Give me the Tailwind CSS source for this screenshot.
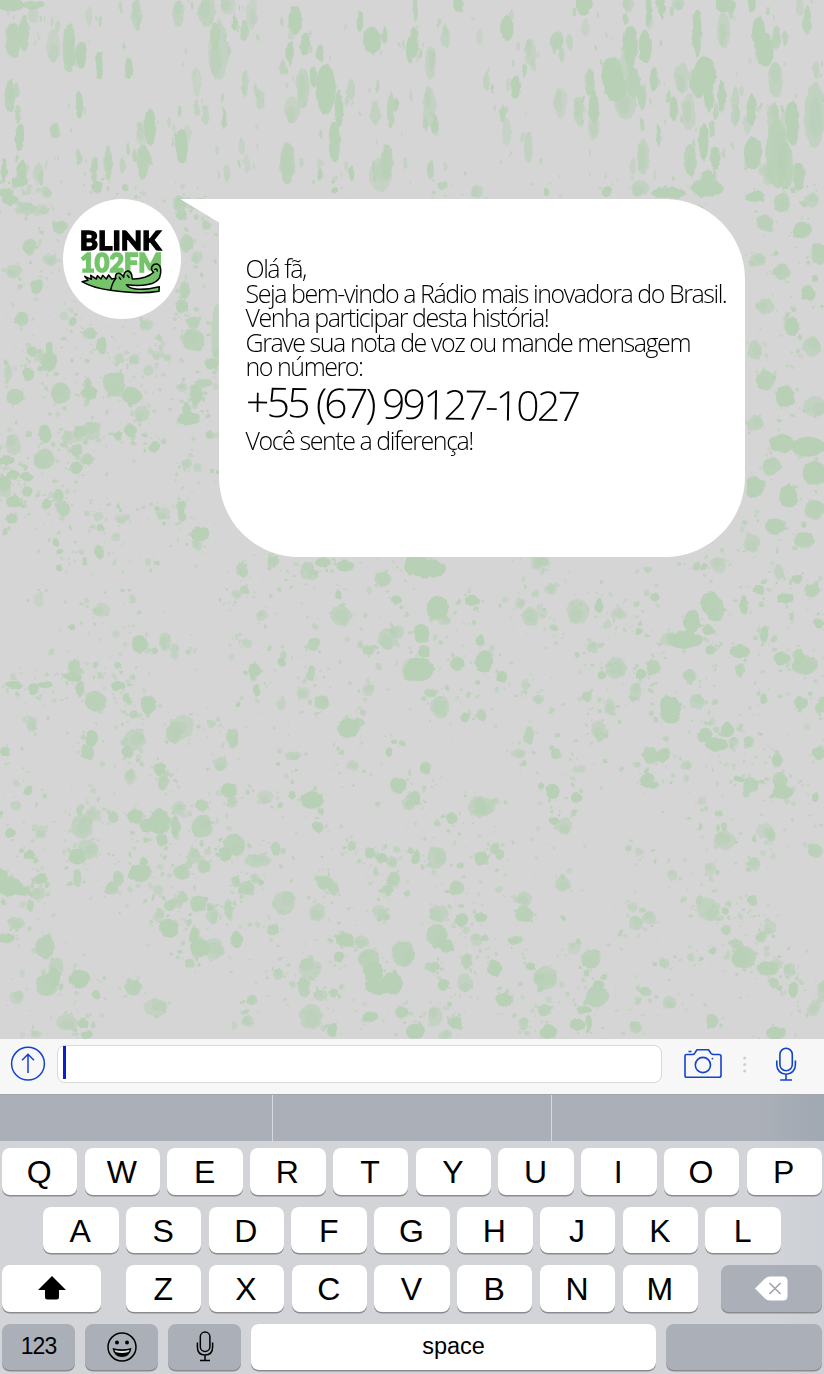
<!DOCTYPE html>
<html lang="pt-BR">
<head>
<meta charset="utf-8">
<title>Blink 102 FM</title>
<script src="https://cdn.jsdelivr.net/npm/@tailwindcss/browser@4"></script>
</head>
<body class="w-[824px] h-[1374px] overflow-hidden bg-[#d5d5d5] text-black flex flex-col">

<main class="relative h-[1039px] shrink-0 overflow-hidden">
  <svg class="absolute inset-0" width="824" height="1039" aria-hidden="true">
    <defs>
      <filter id="rough" x="0" y="0" width="100%" height="100%" color-interpolation-filters="sRGB"><feTurbulence type="fractalNoise" baseFrequency="0.11" numOctaves="2" seed="4"/><feDisplacementMap in="SourceGraphic" scale="4.5" xChannelSelector="R" yChannelSelector="G"/></filter>
    </defs>
    <g id="paint" fill="#b8d0b6" filter="url(#rough)"></g>
  </svg>

  <div class="relative flex items-start pl-[63px] pt-[199px]">
    <div class="w-[118px] h-[120px] rounded-[50%] bg-white shrink-0">
      <svg width="118" height="120" viewBox="39 27 354 360">
        <text x="89" y="179" font-family="Lato" font-weight="900" font-size="81" textLength="245" lengthAdjust="spacingAndGlyphs" stroke="#000" stroke-width="4">BLINK</text>
        <text x="91" y="245" font-family="Lato" font-weight="900" font-size="82" textLength="245" lengthAdjust="spacingAndGlyphs" fill="#75c46b" stroke="#75c46b" stroke-width="5">102FM</text>
        <path d="M96 275L114 271L104 259L124 268L122 256L139 267L142 257L153 267L158 256L169 267L176 255L185 267L197 265C194 252 204 245 214 253L221 262C221 240 239 238 245 254L247 267C274 268 299 259 311 247C298 238 307 220 321 222C335 226 334 247 329 262C319 284 278 290 229 284C239 301 282 301 328 290L327 304C281 312 227 308 181 301C150 297 120 289 96 275Z" fill="#75c46b" stroke="#000" stroke-width="4.5" stroke-linejoin="round"/>
        <path d="M197 266C187 276 185 288 182 300M208 262L212 268M232 256L237 262M314 238Q322 235 322 243" fill="none" stroke="#000" stroke-width="4.5" stroke-linecap="round"/>
      </svg>
    </div>
    <svg class="shrink-0" width="38" height="24" viewBox="0 0 38 24"><path d="M-1 0H38V23.5Z" fill="#fff"/></svg>
    <section class="w-[526px] h-[358px] shrink-0 bg-white rounded-tr-[80px] rounded-b-[80px] pl-[26.5px] pt-[57px] whitespace-nowrap font-['Open_Sans'] font-light text-[25px] leading-[24.5px] tracking-[-1.45px]">
      <p>Olá fã,</p>
      <p>Seja bem-vindo a Rádio mais inovadora do Brasil.</p>
      <p>Venha participar desta história!</p>
      <p>Grave sua nota de voz ou mande mensagem</p>
      <p>no número:</p>
      <p class="h-[49px] w-fit text-[41px] leading-[49px] tracking-[-2.75px] rotate-[0.8deg]">+55 (67) 99127-1027</p>
      <p>Você sente a diferença!</p>
    </section>
  </div>
</main>

<div class="h-[55px] shrink-0 bg-[#f7f7f7] flex items-start pl-[10px] pt-[6px]">
  <svg class="mt-[1px]" width="36" height="36" viewBox="0 0 36 36" fill="none" stroke="#1342cf" stroke-width="1.5"><circle cx="18" cy="17.7" r="16.4"/><path d="M18 27V8.5M12 14.2L18 8.3L24 14.2"/></svg>
  <div class="ml-[11px] w-[605px] h-[38px] bg-white border border-[#d9d9db] rounded-[8px] pl-[5px]"><div class="w-[3px] h-[33px] bg-[#0a20d0]"></div></div>
  <svg class="ml-[21px]" width="40" height="38" viewBox="0 0 40 38" fill="none" stroke="#1342cf" stroke-width="1.6" stroke-linejoin="round"><path d="M3.5 9.5H9.5Q11.5 9.5 12.5 7L14 4.8H25.5L28 8.5Q29 9.5 31 9.5H36Q38 9.5 38 11.5V30.5Q38 32.3 36 32.3H3.8Q2 32.3 2 30.5V11Q2 9.5 3.5 9.5ZM5.5 6.5H8.5"/><circle cx="19.9" cy="20" r="7.6"/><circle cx="29.4" cy="13.6" r=".9" fill="#1342cf" stroke="none"/></svg>
  <svg class="ml-[18px]" width="8" height="38" fill="#cfcfd0"><circle cx="3.7" cy="13" r="1.5"/><circle cx="3.7" cy="19.5" r="1.5"/><circle cx="3.7" cy="26" r="1.5"/></svg>
  <svg class="ml-[25px]" width="24" height="38" viewBox="0 0 24 38" fill="none" stroke="#1342cf" stroke-width="1.6"><rect x="5.9" y="3.3" width="12.4" height="22.4" rx="6.2"/><path d="M2.8 15.5V20A9.3 9.3 0 0 0 21.4 20V15.5M12 29.3V34.8M6.2 35H18"/></svg>
</div>

<div class="h-[47px] shrink-0 bg-gradient-to-r from-[#abb0b8] from-92% to-[#a0a8b2] border-t border-[#a2a5ab] grid grid-cols-[272px_278px_1fr]">
  <div></div><div class="border-x-[1.5px] border-[#d8dadd] w-[280px]"></div><div></div>
</div>

<div class="h-[233px] shrink-0 bg-gradient-to-r from-[#d2d4d8] from-92% to-[#cdd0d6] px-[2px] pt-[7px] flex flex-col gap-[12px] font-['Liberation_Sans'] text-[32px] leading-none">
  <div id="row1" class="grid grid-cols-10 gap-[7.3px] h-[46.5px]"></div>
  <div id="row2" class="grid grid-cols-9 gap-[7.3px] h-[46.5px] ml-[41px] mr-[41px]"></div>
  <div class="flex h-[46.5px]">
    <div class="w-[99px] rounded-[8px] bg-white shadow-[0_1.5px_0_#898b8f] flex items-center justify-center"><svg width="28" height="24" viewBox="0 0 28 24"><path d="M14 0L28 14H21V21Q21 23.5 18.5 23.5H9.5Q7 23.5 7 21V14H0Z"/></svg></div>
    <div id="row3" class="grid grid-cols-7 gap-[7.3px] w-[572px] ml-[25px]"></div>
    <div class="w-[101px] ml-auto rounded-[8px] bg-[#abb0b8] shadow-[0_1.5px_0_#898b8f] flex items-center justify-center"><svg width="33" height="25" viewBox="0 0 33 25"><path d="M0 12.5L10 2.5Q12 .5 15 .5H28Q32.5 .5 32.5 5V20Q32.5 24.5 28 24.5H15Q12 24.5 10 22.5Z" fill="#fff"/><path d="M14.5 7L25.5 18M25.5 7L14.5 18" stroke="#a0a4aa" stroke-width="1.6"/></svg></div>
  </div>
  <div class="flex h-[46.5px] text-[23px] leading-none">
    <div class="w-[73px] rounded-[8px] bg-[#abb0b8] shadow-[0_1.5px_0_#898b8f] flex items-center justify-center tracking-[-1px]">123</div>
    <div class="w-[73px] ml-[10px] rounded-[8px] bg-[#abb0b8] shadow-[0_1.5px_0_#898b8f] flex items-center justify-center"><svg width="30" height="30" viewBox="0 0 30 30"><circle cx="15" cy="15" r="14" fill="none" stroke="#000" stroke-width="1.5"/><circle cx="10" cy="10.5" r="2"/><circle cx="20" cy="10.5" r="2"/><path d="M5.5 16Q15 18.5 24.5 16Q23 25 15 25Q7 25 5.5 16Z"/><path d="M7.5 18Q15 20 22.5 18L21.5 20Q15 22 8.5 20Z" fill="#dfe1e4"/></svg></div>
    <div class="w-[73px] ml-[10px] rounded-[8px] bg-[#abb0b8] shadow-[0_1.5px_0_#898b8f] flex items-center justify-center"><svg width="18" height="31" viewBox="0 0 18 31" fill="none" stroke="#000" stroke-width="1.5"><rect x="4.3" y="1" width="9.6" height="19.5" rx="4.8"/><path d="M1.4 11.5V16Q1.4 24 9 24Q16.6 24 16.6 16V11.5M9 24V29.5M4 29.5H14"/></svg></div>
    <div class="w-[405px] ml-[10px] rounded-[8px] bg-white shadow-[0_1.5px_0_#898b8f] flex items-center justify-center text-[23.5px] leading-none pb-[1px]">space</div>
    <div class="w-[156px] ml-[10px] rounded-[8px] bg-[#abb0b8] shadow-[0_1.5px_0_#898b8f]"></div>
  </div>
</div>

<script>
const fillRow = (id, letters) => {
  document.getElementById(id).innerHTML = [...letters].map(c =>
    `<div class="rounded-[8px] bg-white shadow-[0_1.5px_0_#898b8f] flex items-center justify-center pt-[2px] pr-[1px]">${c}</div>`).join('');
};
fillRow('row1', 'QWERTYUIOP');
fillRow('row2', 'ASDFGHJKL');
fillRow('row3', 'ZXCVBNM');

// Paint splatter. Each sheet: origin, then drops as "x y rx ry strength(1-9)" in thirds of a pixel.
const sheets = [
 [0,0,`30 15 45 18 9;100 15 35 12 8;100 45 13 25 5;40 120 24 55 8;72 100 16 55 8;160 135 22 50 4;208 145 20 73 8;243 165 15 40 9;298 195 13 42 9;268 50 9 30 4;410 45 16 45 7;386 203 11 32 9;30 290 16 50 8;238 315 11 42 9;60 410 13 38 9;165 390 16 25 8;450 380 18 55 9;425 400 18 40 3;430 485 20 52 8;545 440 18 50 9;560 405 14 30 4;325 490 12 52 8;280 515 9 30 8;115 520 14 28 6;65 520 15 38 9;12 510 8 35 9;590 245 13 44 4;590 325 8 24 7;617 345 11 30 7;535 40 17 40 7;620 35 26 45 7;685 15 22 30 5;655 155 30 85 6;645 110 14 45 8;733 90 12 30 8;755 40 17 45 4;703 68 8 22 9;735 250 9 42 7;780 300 13 30 7;885 60 20 45 9;870 160 11 34 9;915 135 16 34 9;908 265 20 60 7;875 330 22 40 5;977 268 30 75 9;1017 325 13 55 9;1003 425 17 60 9;940 230 10 33 9;960 160 11 25 9;862 490 22 63 8;1052 270 13 32 7;1117 120 28 40 9;1126 340 14 35 7;1172 330 11 55 8;1140 525 33 50 5;1160 485 18 52 8;1080 65 10 30 9;1230 150 12 40 9;725 440 10 24 5;740 490 10 30 4;680 520 9 28 6;1055 520 8 24 9;960 525 8 18 9;290 560 17 18 9;60 545 25 15 9;140 575 16 15 7;15 580 25 14 9;375 565 10 9 9;1005 570 9 9 9`],
 [412,0,`5 130 14 45 9;10 30 8 35 8;138 10 14 26 9;100 112 15 32 7;55 190 16 50 6;52 320 20 60 6;68 370 9 33 9;285 85 20 38 9;355 158 17 42 6;203 110 9 25 4;223 245 10 30 7;311 262 13 35 9;272 340 9 28 8;284 395 13 42 5;350 440 14 48 7;436 122 19 28 8;472 128 11 23 7;520 80 12 30 4;515 12 24 32 9;445 310 20 46 4;500 335 16 45 7;533 245 16 40 8;545 320 15 50 9;545 380 17 42 5;600 220 33 50 9;610 260 35 45 9;655 140 22 62 9;700 140 20 48 9;635 200 15 40 6;640 310 33 48 6;665 250 23 45 8;690 290 13 38 8;650 15 17 22 7;710 30 9 50 9;750 20 9 40 9;800 10 18 20 7;725 235 12 38 9;785 325 12 36 9;693 470 17 55 7;740 405 7 33 9;940 15 32 22 9;935 90 20 54 6;855 100 14 70 9;880 220 33 52 9;810 235 22 45 6;860 250 26 45 9;830 335 22 55 5;890 280 15 50 9;875 425 14 58 9;910 475 16 36 9;835 480 20 48 8;930 290 12 48 9;970 320 13 60 7;1018 330 15 48 9;1005 370 10 36 5;1040 100 20 50 9;1060 150 25 50 9;1090 240 23 52 7;1093 115 12 35 8;1083 350 18 45 7;1140 370 20 65 9;1022 460 27 48 9;1095 460 32 105 8;1070 520 22 35 6;1120 500 26 70 8;1208 345 31 98 7;1185 60 13 45 8;1020 15 11 23 9;1213 210 10 26 7;1160 530 16 42 9;885 565 47 28 9;885 535 20 23 9;770 578 50 17 9;685 565 30 23 7;585 575 17 17 9;405 575 10 10 9;195 575 18 18 7;93 555 14 12 8`],
 [0,560,`178 25 10 10 9;115 120 15 20 4;303 148 25 24 5;398 118 9 14 7;217 202 9 9 9;350 222 13 14 5;418 252 25 27 9;495 245 18 28 7;523 275 14 24 6;222 320 18 24 8;218 350 28 14 9;285 315 10 10 8;353 317 11 11 8;42 375 29 12 9;100 388 16 19 9;135 375 23 9 9;287 423 32 31 8;240 385 13 24 9;353 377 23 14 9;446 435 24 26 9;400 460 14 12 8;380 415 12 13 8;95 493 16 23 7;275 535 19 25 9;262 575 20 22 8;402 540 34 32 6;382 575 18 21 9;550 500 32 37 6;522 520 21 32 8;15 577 15 14 9;480 627 18 18 9;390 650 17 23 6;83 693 14 13 9;490 670 16 20 8;698 533 20 29 8;662 612 20 20 7;633 490 12 12 7;687 692 23 22 9;697 725 16 18 7;795 712 22 20 5;875 705 13 11 9;935 720 34 26 9;953 800 17 17 9;1045 505 31 31 9;1078 487 18 12 8;965 428 22 22 8;910 400 20 18 5;843 436 15 15 6;932 340 13 23 8;845 307 13 14 9;763 330 18 20 9;770 390 12 20 9;742 250 14 14 6;710 104 16 14 5;735 90 15 13 8;787 164 18 16 5;725 30 16 23 8;923 30 20 25 7;940 45 14 16 7;1035 18 26 17 9;1148 58 25 22 8;1022 167 32 32 7;1165 237 30 32 7;1190 215 20 20 7;940 252 18 18 8;1015 103 9 12 9;1190 120 17 14 9;1230 330 24 34 5;1105 270 18 16 8;1105 390 18 19 5;1195 675 25 23 9;1055 617 18 17 5;1168 577 11 11 9;880 588 22 16 7;1225 730 17 20 6;246 800 32 38 7;240 750 11 16 8;265 870 32 30 6;232 890 24 24 9;280 765 22 22 5;340 770 15 16 8;405 767 23 22 9;440 795 25 19 9;480 785 30 38 9;527 797 16 30 9;485 840 17 17 9;538 745 23 22 6;605 800 30 35 8;605 735 20 18 8;703 855 32 33 8;675 885 17 20 9;772 902 38 20 7;827 865 14 22 8;125 815 18 18 5;47 737 15 17 7;30 820 15 15 9;25 980 42 28 9;65 995 28 14 9;0 945 24 20 9;123 955 20 16 9;115 1000 20 20 7;90 1035 12 18 8;48 1090 23 18 7;90 885 16 14 9;232 955 12 29 8;335 985 20 18 8;355 955 16 22 8;420 940 34 26 9;430 907 14 18 9;545 935 24 23 8;580 890 22 22 7;612 918 20 22 8;475 990 15 17 6;510 1035 18 18 8;475 1070 17 18 5;508 1105 28 29 9;548 1010 14 18 8;595 1030 25 26 8;635 1065 18 28 7;685 1050 14 23 8;600 1165 32 26 9;640 1167 33 32 6;583 1125 15 24 9;710 1140 19 27 9;740 985 24 22 8;707 965 16 17 8;767 955 14 16 7;853 1028 34 35 7;953 1060 25 27 7;975 967 24 20 8;1000 990 15 16 8;1180 957 20 22 8;1163 990 18 18 8;1110 878 18 15 9;1145 895 16 16 9;1175 905 18 20 6;1055 860 13 14 8;1140 1057 21 22 6;135 1160 30 35 8;168 1220 22 28 7;140 1275 32 33 8;165 1250 16 30 9;238 1257 30 28 9;400 1282 25 25 8;467 1343 34 28 6;48 1312 20 20 6;200 1388 32 26 6;247 1388 16 16 9;260 1423 18 12 9;108 1423 17 14 6;288 1305 13 15 9;570 1210 15 16 8;20 1135 24 15 9;757 1320 16 16 8;745 1383 18 17 7;835 1243 16 16 7;817 1110 17 16 8;930 1225 34 30 6;912 1280 18 32 8;933 1370 34 38 7;962 1305 20 18 7;998 1410 14 22 9;1105 1195 32 28 8;1120 1235 30 30 9;1175 1270 34 33 9;1140 1280 44 25 9;1210 1180 35 38 8;1035 1140 28 20 9;1085 1145 20 18 7;1018 1190 16 16 9;1000 1300 16 14 8;1110 1370 22 16 9;1205 1355 20 18 9`],
 [412,560,`50 25 52 28 9;0 15 25 30 9;78 145 34 35 9;97 180 20 17 6;182 122 22 15 9;28 220 24 30 9;35 275 18 20 9;20 330 46 34 9;137 312 21 22 9;217 305 27 32 9;205 240 14 18 9;270 350 16 18 9;85 440 30 35 7;55 398 18 14 8;160 472 15 16 9;207 465 16 18 8;355 170 25 28 7;392 160 15 16 4;323 130 17 16 6;415 87 18 16 6;375 10 20 20 5;497 155 33 38 6;562 135 12 22 9;617 160 20 18 5;585 193 12 14 6;427 203 14 12 8;543 262 18 16 7;612 325 31 32 7;570 345 13 12 9;725 320 22 23 8;688 343 16 14 9;670 395 18 26 7;595 440 18 26 5;525 408 17 16 8;560 505 21 25 6;560 530 14 13 7;350 525 14 26 8;340 375 14 15 6;380 418 16 13 7;320 582 22 16 6;433 583 16 18 8;507 627 12 12 5;40 625 16 19 9;422 695 21 22 9;494 713 17 17 9;208 740 39 32 7;205 740 20 25 9;118 775 16 18 9;8 717 17 22 9;455 797 26 23 6;428 782 15 10 9;75 893 28 32 7;208 895 20 20 9;247 867 14 17 8;262 883 14 16 8;12 890 12 22 9;133 985 24 23 8;452 973 24 22 7;338 1018 22 23 7;337 1063 28 24 8;80 1060 30 25 7;150 1080 20 20 9;205 1070 18 16 9;75 1128 32 36 8;105 1160 20 20 9;193 1140 20 18 5;310 1140 24 12 8;165 1203 18 22 8;62 1220 25 16 8;95 1275 18 18 9;158 1268 21 27 6;248 1225 20 25 9;400 1253 36 36 7;383 1256 16 18 9;355 1220 14 13 9;277 1320 24 21 9;397 1350 20 18 8;537 1195 30 28 8;487 1165 20 20 4;555 1310 34 32 8;560 1280 14 20 9;515 1350 25 12 9;495 1395 22 20 9;530 1388 10 22 9;70 1370 22 28 6;130 1388 20 18 9;10 1415 28 24 9;100 1425 22 14 6;410 1415 25 20 9;335 1390 16 18 7;673 1090 22 23 7;713 1075 20 20 7;662 1042 14 13 6;757 1208 16 17 7;773 1328 20 18 7;700 1295 16 16 8;672 1400 18 18 8;837 1192 11 11 7;680 215 12 12 9;728 112 14 14 9;895 130 28 36 9;910 150 30 35 8;840 185 24 34 9;820 240 52 27 9;770 238 22 22 7;890 210 18 14 9;918 15 24 24 5;853 18 13 14 8;1040 90 18 16 9;995 133 14 28 9;1120 115 25 15 9;1155 57 17 12 9;1100 37 15 22 7;1200 90 24 18 8;1220 190 16 15 9;1055 225 13 25 9;985 275 32 20 9;895 270 15 14 9;1110 295 25 20 9;1180 315 38 30 8;1160 290 16 24 8;833 345 18 18 8;985 330 14 22 8;855 425 22 23 7;775 450 32 40 9;765 435 20 28 9;1165 428 23 20 9;1225 443 18 16 8;1055 415 10 18 9;880 525 22 22 9;945 510 22 22 9;915 555 34 20 9;965 545 16 14 6;1010 545 16 17 8;715 587 24 25 8;752 587 20 22 9;705 662 20 22 9;728 675 12 10 9;823 617 16 16 7;1015 675 24 25 8;980 655 18 9 9;1105 660 23 25 8;1112 697 30 21 9;1095 600 16 20 9;1220 580 18 20 9;937 840 32 31 6;925 825 10 11 8;1060 812 26 21 5;1078 828 16 15 8;1025 912 20 18 7;895 927 17 20 4;780 945 17 17 5;1210 873 22 22 8;1210 710 10 16 9;888 1048 34 33 7;860 1020 12 12 8;938 1055 12 12 9;1020 1022 16 16 8;1075 1105 22 18 5;1048 1130 18 18 8;998 1192 34 33 8;985 1200 24 23 9;1068 1225 33 22 9;1095 1215 16 17 6;1132 1230 18 22 6;1143 1290 14 24 9;1085 1270 16 16 8;1235 1295 20 32 6;1205 1345 20 24 5;1090 1420 28 20 9;900 1380 17 22 8;940 1110 14 16 8;970 1150 22 12 8;920 760 12 10 8;870 722 13 11 5;682 875 12 12 6`],
 [0,300,`65 57 23 19 8;193 48 14 13 5;218 65 12 13 9;270 100 22 18 8;305 138 14 25 9;145 185 24 30 9;148 150 13 22 9;85 222 18 22 9;25 220 12 24 7;97 152 14 16 9;183 280 30 33 8;45 290 26 24 8;267 278 23 22 9;263 250 12 14 9;343 252 33 37 8;395 287 30 26 9;357 177 14 15 7;403 178 16 16 7;425 340 21 24 7;445 213 15 14 7;440 75 18 20 7;475 165 22 15 5;545 20 20 22 9;580 120 33 34 8;580 68 20 18 8;588 285 18 33 9;545 262 18 14 6;610 250 24 13 8;565 355 34 20 9;560 325 14 17 9;650 110 15 100 7;635 190 22 16 9;270 393 32 28 7;240 395 20 17 9;210 412 23 22 5;135 400 18 26 9;230 450 18 18 8;132 478 31 30 8;40 435 26 30 6;228 503 18 19 9;262 477 18 17 8;355 407 14 15 9;390 390 18 18 9;462 442 15 16 9;20 480 24 14 9;40 525 20 14 9;80 530 20 14 9;12 550 22 22 9;12 573 22 18 6;82 573 16 14 9;40 605 22 18 9;142 613 16 17 9;188 625 22 23 8;175 587 16 20 8;35 655 17 16 9;490 640 22 18 5;362 655 17 15 5;295 652 13 13 6;542 620 17 17 8;545 645 12 20 9;600 702 28 22 9;592 735 16 16 6;560 490 16 16 7;592 503 12 14 6;630 405 14 12 9;168 727 10 12 9;297 757 14 20 9;300 683 13 11 8;348 713 12 12 6`],
 [0,190,`120 60 28 18 5;180 110 22 20 8;30 30 25 15 9;90 170 20 25 8;40 245 22 20 7;110 290 20 20 9;540 40 20 22 8;545 75 18 15 9;600 35 18 12 8;560 160 20 26 8;590 200 18 18 7;555 300 16 26 8;150 210 22 18 6;80 55 30 18 7;620 105 14 14 8`],
 [745,190,`30 20 30 18 9;110 40 25 30 8;200 30 22 22 7;60 100 25 26 8;170 120 28 25 9;220 190 24 34 8;40 210 22 22 7;110 245 28 25 8;190 310 22 22 9;60 350 28 24 7;140 410 22 28 9;30 480 20 28 7;200 470 28 30 7;60 570 28 30 8;120 620 30 30 9;210 650 35 30 6;30 700 25 22 7;110 760 38 28 9;190 770 50 30 9;80 830 28 25 8;210 850 40 35 9;30 890 28 32 9;130 920 30 32 9;210 960 28 30 8;90 1010 30 25 9;20 1060 25 28 7;180 1050 30 25 8`],
 [150,560,`20 10 9 9 8;370 5 18 16 8;520 8 25 14 9;800 0 35 20 9;1180 5 18 16 8`]
];
let seed = 77;
const rnd = () => (seed = (seed * 16807) % 2147483647) / 2147483647;
const out = [];
const drop = (x, y, rx, ry, o) => out.push(`<ellipse cx="${x.toFixed(1)}" cy="${y.toFixed(1)}" rx="${rx.toFixed(1)}" ry="${ry.toFixed(1)}" opacity="${o.toFixed(2)}"/>`);
const strengths = [0, .2, .3, .35, .42, .5, .58, .7, .88, 1];
for (const [ox, oy, list] of sheets) {
  for (const item of list.split(';')) {
    const [x, y, rx, ry, s] = item.split(' ').map(Number);
    const cx = ox + x / 3, cy = oy + y / 3, tall = cy < 178;
    drop(cx, cy, rx / 3, ry / 3, strengths[s]);
    if (s < 9 && rx > 15) drop(cx + (rnd() - .5) * rx / 4, cy + (rnd() - .5) * ry / 3, rx / 5, ry / 5, .5);
    // fine spray thrown around every drop
    const n = tall ? 2 : 7;
    for (let i = 0; i < n; i++) {
      const a = rnd() * 6.283, d = 7 + rnd() * rnd() * 34, r = .8 + rnd() * rnd() * 2.8;
      const py = cy + Math.sin(a) * d;
      drop(cx + Math.cos(a) * d, py, r, py < 178 ? r * 2.8 : r * (.8 + rnd() * .4), .45 + rnd() * .55);
    }
  }
}
document.getElementById('paint').innerHTML = out.join('');
</script>
</body>
</html>
